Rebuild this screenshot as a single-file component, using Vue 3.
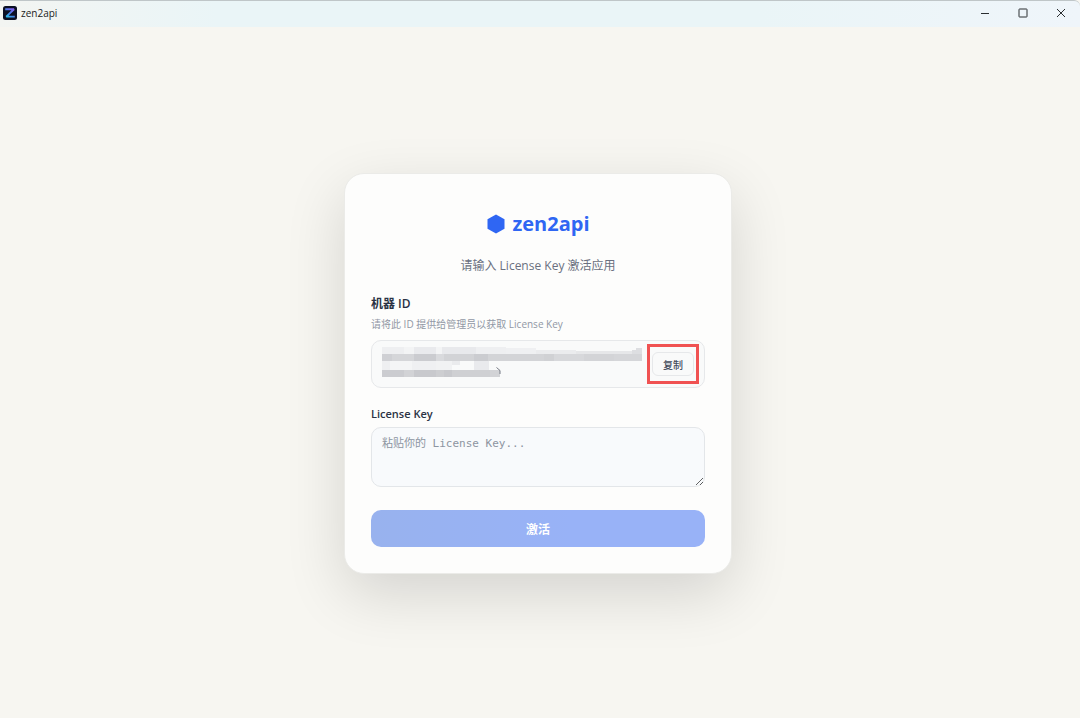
<script setup>
import { ref } from 'vue'

const licenseKey = ref('')

// Redaction mosaic: [x, y, width, height, shade]
const mosaic = [
  [0, 0, 22, 7, '#eeeff1'], [22, 0, 10, 7, '#f3f4f5'], [32, 0, 22, 7, '#e9eaed'], [54, 0, 6, 7, '#f3f4f5'],
  [60, 0, 34, 7, '#e8e9ec'], [94, 0, 30, 7, '#eeeff1'], [124, 1, 30, 6, '#eff0f2'], [154, 3, 40, 4, '#ebecee'],
  [194, 4, 56, 3, '#e6e7e9'], [250, 3, 4, 4, '#dddee1'], [254, 1, 6, 6, '#dddee1'],
  [0, 7, 10, 7, '#cfd0d4'], [10, 7, 22, 7, '#d5d6d9'], [32, 7, 22, 7, '#cbccd0'], [54, 7, 8, 7, '#d9dadd'],
  [62, 7, 30, 7, '#d2d3d6'], [92, 7, 14, 7, '#cbccd0'], [106, 7, 56, 7, '#d3d4d7'], [162, 7, 10, 7, '#d0d1d4'],
  [172, 7, 30, 7, '#d7d8db'], [202, 7, 30, 7, '#d3d4d7'], [232, 7, 28, 7, '#d5d6d9'],
  [0, 14, 8, 9, '#eeeff1'], [8, 14, 22, 9, '#f4f5f6'], [30, 14, 24, 9, '#eff0f2'], [54, 14, 16, 9, '#f1f2f3'],
  [70, 14, 8, 4, '#eaebed'], [92, 14, 15, 9, '#e9eaed'],
  [0, 23, 22, 7, '#cbccd0'], [22, 23, 10, 7, '#d2d3d6'], [32, 23, 22, 7, '#c8c9cd'], [54, 23, 8, 7, '#cdced1'],
  [62, 23, 8, 7, '#c8c9cd'], [70, 23, 38, 7, '#cfd0d3'], [108, 23, 10, 7, '#d2d3d6'],
]
</script>

<template>
  <div class="window">
    <header class="titlebar">
      <div class="app">
        <svg class="app-icon" viewBox="0 0 14 14" aria-hidden="true">
          <defs>
            <linearGradient id="zg" x1="1" y1="0" x2="0" y2="1">
              <stop offset="0" stop-color="#8a5cf0" />
              <stop offset="0.5" stop-color="#4a7de8" />
              <stop offset="1" stop-color="#25c4e8" />
            </linearGradient>
          </defs>
          <rect width="14" height="14" rx="2.5" fill="#0b1024" />
          <path d="M2.2 3.3H11L3.3 10.6H11.8" fill="none" stroke="url(#zg)" stroke-width="1.9" stroke-linejoin="bevel" />
        </svg>
        <span>zen2api</span>
      </div>
      <div class="controls">
        <button type="button" aria-label="Minimize">
          <svg viewBox="0 0 10 10"><path d="M1 5.5H9" /></svg>
        </button>
        <button type="button" aria-label="Maximize">
          <svg viewBox="0 0 10 10"><rect x="1" y="1" width="8" height="8" rx="0.5" /></svg>
        </button>
        <button type="button" aria-label="Close">
          <svg viewBox="0 0 10 10"><path d="M1 1L9 9M9 1L1 9" /></svg>
        </button>
      </div>
    </header>

    <main>
      <form class="card" @submit.prevent>
        <h1>
          <svg class="hex" viewBox="0 0 18 20" aria-hidden="true"><path d="M9 0.5L17.5 5.2V14.8L9 19.5L0.5 14.8V5.2Z" fill="#2f66f3" /></svg>
          <span>zen2api</span>
        </h1>
        <p class="subtitle">请输入 License Key 激活应用</p>

        <h2 class="label">机器 ID</h2>
        <p class="hint">请将此 ID 提供给管理员以获取 License Key</p>
        <div class="machine">
          <svg class="mosaic" viewBox="0 0 262 30" aria-hidden="true">
            <rect v-for="(m, i) in mosaic" :key="i" :x="m[0]" :y="m[1]" :width="m[2]" :height="m[3]" :fill="m[4]" />
            <path d="M114.5 20.5L118 23.5V27" fill="none" stroke="#777b85" />
          </svg>
          <div class="copy-area">
            <button type="button" class="copy">复制</button>
          </div>
        </div>

        <label class="label latin" for="license">License Key</label>
        <textarea id="license" v-model="licenseKey" placeholder="粘贴你的 License Key..."></textarea>
        <button type="submit" class="activate" disabled>激活</button>
      </form>
    </main>
  </div>
</template>

<style>
body {
  margin: 0;
  background: #f7f6f1;
}
</style>

<style scoped>
* {
  box-sizing: border-box;
}
.window {
  min-height: 100vh;
  display: flex;
  flex-direction: column;
  background: #f7f6f1;
  font-family: "Open Sans", "Noto Sans CJK SC", sans-serif;
  color: #2b3344;
}
button {
  font-family: inherit;
  padding: 0;
  border: 0;
}
.titlebar {
  height: 27px;
  padding-bottom: 2px;
  display: flex;
  justify-content: space-between;
  border-top: 1px solid #bfc6c8;
  border-top-right-radius: 6px;
  background: linear-gradient(90deg, #f3f5f2, #eaf5f7 20%, #eaf5f7 70%, #eff5fa);
}
.app {
  display: flex;
  align-items: center;
  gap: 4px;
  padding-left: 3px;
  font-size: 10px;
  color: #222;
}
.app-icon {
  width: 14px;
  height: 14px;
}
.controls {
  display: flex;
}
.controls button {
  width: 38px;
  display: flex;
  align-items: center;
  justify-content: center;
  background: none;
}
.controls svg {
  width: 10px;
  height: 10px;
  fill: none;
  stroke: #2a2e30;
}
main {
  flex: 1;
  display: flex;
  align-items: center;
  justify-content: center;
  padding: 2px 4px 0 0;
}
.card {
  width: 388px;
  max-width: 100%;
  padding: 36px 26px 26px;
  display: flex;
  flex-direction: column;
  border: 1px solid #ebebe8;
  border-radius: 20px;
  background: #fdfdfc;
  box-shadow: 0 20px 60px rgba(0, 0, 0, 0.14);
}
h1 {
  margin: 0;
  display: flex;
  align-items: center;
  justify-content: center;
  gap: 8px;
  font-size: 20px;
  line-height: 28px;
  color: #2f66f3;
}
.hex {
  width: 18px;
  height: 20px;
}
.subtitle {
  margin: 18px 0 18px;
  text-align: center;
  font-size: 12px;
  line-height: 20px;
  color: #6a7080;
}
.label {
  margin: 0;
  font-size: 12px;
  line-height: 20px;
  font-weight: 600;
}
.label.latin {
  font-size: 11px;
}
.hint {
  margin: 1px 0 7px;
  font-size: 10px;
  line-height: 18px;
  color: #9198a5;
}
.machine {
  height: 48px;
  margin-bottom: 16px;
  padding: 0 5px 0 10px;
  display: flex;
  align-items: center;
  justify-content: space-between;
  border: 1px solid #e6e8ea;
  border-radius: 10px;
  background: #f9fafa;
}
.mosaic {
  width: 262px;
  height: 30px;
  margin-bottom: 4px;
}
.copy-area {
  padding: 5px 2px;
  border: 3px solid #f05252;
}
.copy {
  width: 42px;
  height: 24px;
  display: block;
  border: 1px solid #e6e8ea;
  border-radius: 6px;
  background: #f9fafa;
  font-size: 10px;
  font-weight: 500;
  color: #454c5c;
}
textarea {
  height: 60px;
  margin: 3px 0 23px;
  padding: 7px 10px;
  border: 1px solid #e3e6e9;
  border-radius: 10px;
  background: #f8fafc;
  font-family: "DejaVu Sans Mono", "Noto Sans CJK SC", monospace;
  font-size: 11px;
  line-height: 18px;
  resize: vertical;
}
textarea::placeholder {
  color: #8d95a1;
}
.activate {
  height: 37px;
  border-radius: 10px;
  background: linear-gradient(90deg, #98b2ee, #98b2f7 60%);
  font-size: 12px;
  font-weight: 700;
  color: #fff;
}
</style>
